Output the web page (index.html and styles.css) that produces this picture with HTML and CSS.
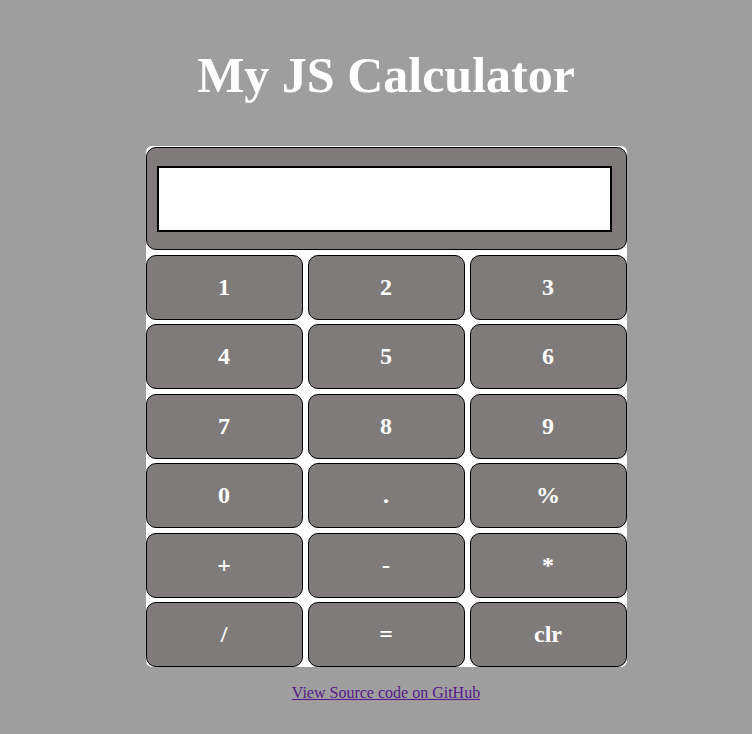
FILE: index.html
```html
<!DOCTYPE html>
<html>
<head>
<meta charset="utf-8">
<title>My JS Calculator</title>
<link rel="stylesheet" href="styles.css">
</head>
<body>
<div class="page">
  <h1 class="title">My JS Calculator</h1>
  <div class="calc">
    <div class="display"><input class="screen" type="text"></div>
    <div class="keys">
      <button class="key">1</button>
      <button class="key">2</button>
      <button class="key">3</button>
      <button class="key">4</button>
      <button class="key">5</button>
      <button class="key">6</button>
      <button class="key">7</button>
      <button class="key">8</button>
      <button class="key">9</button>
      <button class="key">0</button>
      <button class="key">.</button>
      <button class="key">%</button>
      <button class="key">+</button>
      <button class="key">-</button>
      <button class="key">*</button>
      <button class="key">/</button>
      <button class="key">=</button>
      <button class="key">clr</button>
    </div>
  </div>
  <p class="source"><a href="#" class="src-link">View Source code on GitHub</a></p>
</div>
</body>
</html>
```
FILE: styles.css
```css
html, body {
  margin: 0;
  padding: 0;
  background: #9e9e9e;
  font-family: "Liberation Serif", "Times New Roman", serif;
}
.page {
  padding: 47px 0 0 20px;
  display: flex;
  flex-direction: column;
  align-items: center;
}
.title {
  margin: 0 0 42px 0;
  font-size: 50px;
  font-weight: bold;
  color: #fff;
  line-height: 57px;
}
.calc {
  width: 481px;
  background: #fff;
  border-radius: 6px;
  display: flex;
  flex-direction: column;
  gap: 5px;
  padding-top: 1px;
}
.display {
  background: #7f7b7a;
  border: 1px solid #000;
  border-radius: 10px;
  padding: 18px 0 0 10px;
  box-sizing: border-box;
  height: 103px;
}
.screen {
  display: block;
  width: 455px;
  height: 66px;
  box-sizing: border-box;
  border: 2px solid #000;
  background: #fff;
  margin: 0;
  padding: 0;
  outline: none;
}
.keys {
  display: grid;
  grid-template-columns: repeat(3, 1fr);
  grid-auto-rows: 65px;
  column-gap: 5px;
  row-gap: 4.4px;
}
.key {
  background: #7f7b7a;
  border: 1px solid #000;
  border-radius: 10px;
  color: #fff;
  font-family: "Liberation Serif", "Times New Roman", serif;
  font-weight: bold;
  font-size: 24px;
  padding: 0;
  margin: 0;
}
.source {
  margin: 17px 0 0 0;
  font-size: 16px;
  line-height: 18px;
}
.src-link {
  color: #551a8b;
}
```
